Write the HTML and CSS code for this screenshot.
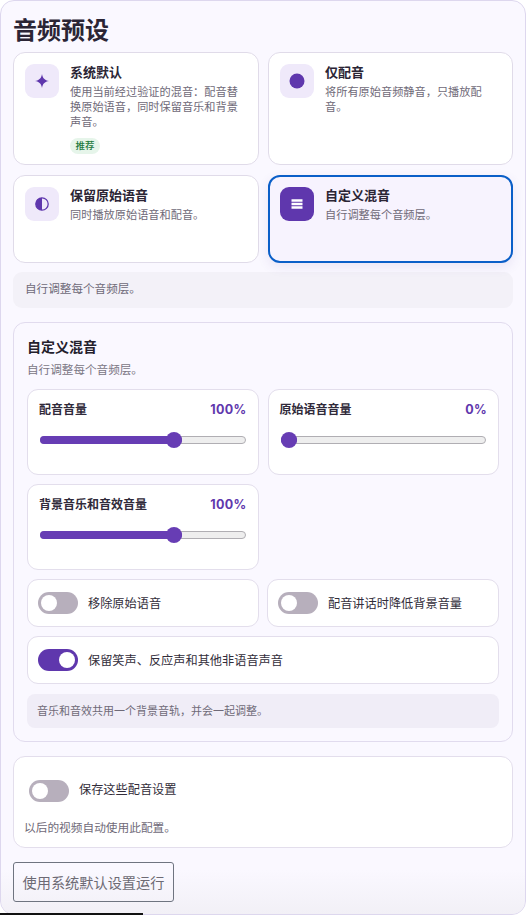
FILE: index.html
```html
<!DOCTYPE html>
<html lang="zh-CN">
<head>
  <meta charset="UTF-8">
  <meta name="viewport" content="width=device-width, initial-scale=1.0">
  <title>音频预设</title>

  <link rel="stylesheet" href="styles.css">
</head>
<body>
  <div class="panel">
    <h1 class="page-title">音频预设</h1>

    <div class="preset-grid">
      <div class="preset tall">
        <div class="preset-icon">
          <svg width="16" height="16" viewBox="0 0 16 16"><path d="M8 1 C8.7 5.3 10.7 7.3 15 8 C10.7 8.7 8.7 10.7 8 15 C7.3 10.7 5.3 8.7 1 8 C5.3 7.3 7.3 5.3 8 1 Z" fill="currentColor"/></svg>
        </div>
        <div class="preset-body">
          <div class="preset-name">系统默认</div>
          <div class="preset-desc">使用当前经过验证的混音：配音替换原始语音，同时保留音乐和背景声音。</div>
          <span class="tag">推荐</span>
        </div>
      </div>

      <div class="preset tall">
        <div class="preset-icon">
          <svg width="16" height="16" viewBox="0 0 16 16"><circle cx="8" cy="8" r="7.5" fill="currentColor"/></svg>
        </div>
        <div class="preset-body">
          <div class="preset-name">仅配音</div>
          <div class="preset-desc">将所有原始音频静音，只播放配音。</div>
        </div>
      </div>

      <div class="preset">
        <div class="preset-icon">
          <svg width="16" height="16" viewBox="0 0 16 16"><circle cx="8" cy="8" r="6.2" fill="none" stroke="currentColor" stroke-width="1.3"/><path d="M8 1.8 A6.2 6.2 0 0 0 8 14.2 Z" fill="currentColor"/></svg>
        </div>
        <div class="preset-body">
          <div class="preset-name">保留原始语音</div>
          <div class="preset-desc">同时播放原始语音和配音。</div>
        </div>
      </div>

      <div class="preset selected">
        <div class="preset-icon">
          <svg width="12" height="10" viewBox="0 0 12 10"><path d="M0.5 0.2 H11.5 V2.8 H0.5 Z M0.5 3.7 H11.5 V6.3 H0.5 Z M0.5 7.2 H11.5 V9.8 H0.5 Z" fill="currentColor"/></svg>
        </div>
        <div class="preset-body">
          <div class="preset-name">自定义混音</div>
          <div class="preset-desc">自行调整每个音频层。</div>
        </div>
      </div>
    </div>

    <div class="summary">自行调整每个音频层。</div>

    <div class="section">
      <div class="section-title">自定义混音</div>
      <div class="section-desc">自行调整每个音频层。</div>

      <div class="slider-grid">
        <div class="slider-card">
          <div class="slider-head">
            <span class="slider-label">配音音量</span>
            <span class="slider-value">100%</span>
          </div>
          <div class="track"><div class="fill" style="width: 69.9%"><span class="thumb"></span></div></div>
        </div>

        <div class="slider-card">
          <div class="slider-head">
            <span class="slider-label">原始语音音量</span>
            <span class="slider-value">0%</span>
          </div>
          <div class="track"><div class="fill" style="width: 0%"><span class="thumb"></span></div></div>
        </div>

        <div class="slider-card">
          <div class="slider-head">
            <span class="slider-label">背景音乐和音效音量</span>
            <span class="slider-value">100%</span>
          </div>
          <div class="track"><div class="fill" style="width: 69.9%"><span class="thumb"></span></div></div>
        </div>
      </div>

      <div class="toggle-grid">
        <div class="toggle-card">
          <span class="switch"></span>
          <span class="toggle-label">移除原始语音</span>
        </div>
        <div class="toggle-card">
          <span class="switch"></span>
          <span class="toggle-label">配音讲话时降低背景音量</span>
        </div>
        <div class="toggle-card wide">
          <span class="switch on"></span>
          <span class="toggle-label">保留笑声、反应声和其他非语音声音</span>
        </div>
      </div>

      <div class="section-note">音乐和音效共用一个背景音轨，并会一起调整。</div>
    </div>

    <div class="save-card">
      <div class="save-row">
        <span class="switch"></span>
        <span class="toggle-label">保存这些配音设置</span>
      </div>
      <div class="save-hint">以后的视频自动使用此配置。</div>
    </div>

    <button class="run-btn">使用系统默认设置运行</button>
  </div>

  <div class="home-bar"></div>
</body>
</html>
```

FILE: styles.css
```css
* {
  box-sizing: border-box;
}

html, body {
  height: 100%;
}

body {
  margin: 0;
  position: relative;
  overflow: hidden;
  background: #fff;
  font-family: Inter, "Noto Sans CJK SC", sans-serif;
  color: #2a2433;
}

.panel {
  position: relative;
  width: 526px;
  height: 915px;
  padding: 12px 13px 0 13px;
  background: #faf8ff;
  border: 1px solid #ddd7ee;
  border-radius: 14px;
  overflow: hidden;
}

.panel:after {
  content: '';
  position: absolute;
  left: 0;
  right: 0;
  bottom: 0;
  height: 44px;
  background: linear-gradient(180deg, rgba(240, 238, 244, 0), rgba(240, 238, 244, 0.8));
  pointer-events: none;
}

.page-title {
  margin: 0 0 4px -1px;
  font-size: 24px;
  line-height: 35px;
  font-weight: 700;
  color: #2b2535;
}

.preset-grid {
  display: grid;
  grid-template-columns: 246px 245px;
  grid-template-rows: 113px 88px;
  column-gap: 9px;
  row-gap: 10px;
  margin-left: -1px;
}

.preset {
  display: flex;
  gap: 11px;
  padding: 11px 11px 0 11px;
  background: #fff;
  border: 1px solid #e0dbe9;
  border-radius: 12px;
}

.preset.selected {
  position: relative;
  z-index: 1;
  background: #f7f3fe;
  border: 2px solid #0a5fc8;
  padding: 10px 10px 0 10px;
  box-shadow: 0 4px 12px rgba(90, 60, 160, 0.1);
}

.preset-icon {
  flex: none;
  display: flex;
  align-items: center;
  justify-content: center;
  width: 34px;
  height: 34px;
  border-radius: 9px;
  background: #efe9fa;
  color: #5f37ad;
}

.selected .preset-icon {
  background: #5f37ad;
  color: #fff;
}

.preset-body {
  flex: 1;
  min-width: 0;
}

.preset-name {
  margin-top: -1px;
  font-size: 13px;
  line-height: 18px;
  font-weight: 700;
  color: #2b2535;
}

.preset-desc {
  margin-top: 4px;
  font-size: 11.2px;
  line-height: 15px;
  color: #6f6a78;
}

.tag {
  display: inline-block;
  margin-top: 8px;
  padding: 0 5.5px;
  font-size: 9.5px;
  line-height: 16px;
  font-weight: 500;
  color: #1c7a3e;
  background: #e6f5ea;
  border-radius: 8px;
}

.summary {
  margin: 9px 0 0 -1px;
  width: 500px;
  height: 36px;
  padding: 0 12px;
  font-size: 11.6px;
  line-height: 35px;
  color: #6f6a78;
  background: #f3f1f8;
  border-radius: 9px;
}

.section {
  width: 500px;
  height: 420px;
  margin: 14px 0 0 -1px;
  padding: 14px 13px;
  border: 1px solid #e1dbee;
  border-radius: 12px;
}

.section-title {
  font-size: 14px;
  line-height: 20px;
  font-weight: 700;
  color: #24202c;
}

.section-desc {
  margin-top: 5px;
  font-size: 11.6px;
  line-height: 17px;
  color: #7b7684;
}

.slider-grid {
  display: grid;
  grid-template-columns: 231.5px 231.5px;
  grid-auto-rows: 86px;
  column-gap: 9px;
  row-gap: 9px;
  margin-top: 10px;
}

.slider-card {
  padding: 9px 12px 0 12px;
  background: #fff;
  border: 1px solid #e3deec;
  border-radius: 11px;
}

.slider-head {
  display: flex;
  justify-content: space-between;
  align-items: center;
  height: 18px;
}

.slider-label {
  margin-left: -1px;
  font-size: 12px;
  font-weight: 700;
  color: #302a3a;
}

.slider-value {
  margin: 2px -1px 0 0;
  font-size: 12.5px;
  font-weight: 700;
  letter-spacing: 0.3px;
  color: #5f37ad;
}

.track {
  height: 8px;
  margin-top: 19px;
  background: #eeeeee;
  border: 1px solid #b0aeb3;
  border-radius: 4px;
}

.fill {
  position: relative;
  min-width: 16px;
  height: 8px;
  margin: -1px 0 0 -1px;
  background: #673db4;
  border-radius: 4px;
}

.thumb {
  position: absolute;
  right: 0;
  top: -4px;
  width: 16px;
  height: 16px;
  background: #673db4;
  border-radius: 50%;
}

.toggle-grid {
  display: grid;
  grid-template-columns: 232px 232px;
  grid-auto-rows: 48px;
  column-gap: 8px;
  row-gap: 9px;
  margin-top: 9px;
}

.toggle-card {
  display: flex;
  align-items: center;
  gap: 10px;
  padding: 0 10px;
  background: #fff;
  border: 1px solid #e3deec;
  border-radius: 11px;
}

.toggle-card.wide {
  grid-column: 1 / 3;
}

.switch {
  flex: none;
  position: relative;
  width: 40px;
  height: 22px;
  background: #b7afbc;
  border-radius: 11px;
}

.switch:before {
  content: '';
  position: absolute;
  left: 3px;
  top: 3px;
  width: 16px;
  height: 16px;
  background: #fff;
  border-radius: 50%;
}

.switch.on {
  background: #5f37ad;
}

.switch.on:before {
  left: 21px;
}

.toggle-label {
  font-size: 12.2px;
  color: #322d3a;
}

.section-note {
  margin-top: 10px;
  height: 34px;
  padding: 0 10px;
  font-size: 11px;
  line-height: 34px;
  color: #6f6a78;
  background: #f0edf7;
  border-radius: 8px;
}

.save-card {
  width: 500px;
  height: 92px;
  margin: 14px 0 0 -1px;
  padding: 23px 11px 0 15px;
  background: #fff;
  border: 1px solid #e3deec;
  border-radius: 12px;
}

.save-row {
  display: flex;
  align-items: center;
  gap: 10px;
}

.save-row .toggle-label {
  margin-bottom: 4px;
}

.save-hint {
  margin: 18px 0 0 -5px;
  font-size: 11.7px;
  line-height: 16px;
  color: #6f6a78;
}

.run-btn {
  position: relative;
  z-index: 1;
  display: block;
  width: 161px;
  height: 40px;
  margin: 14px 0 0 -1px;
  padding: 0;
  font-family: inherit;
  font-size: 14.2px;
  color: #6d6a74;
  background: transparent;
  border: 1px solid #6f7480;
  border-radius: 3px;
}

.home-bar {
  position: absolute;
  left: 0;
  top: 913px;
  width: 143px;
  height: 2px;
  background: #111;
}
```
